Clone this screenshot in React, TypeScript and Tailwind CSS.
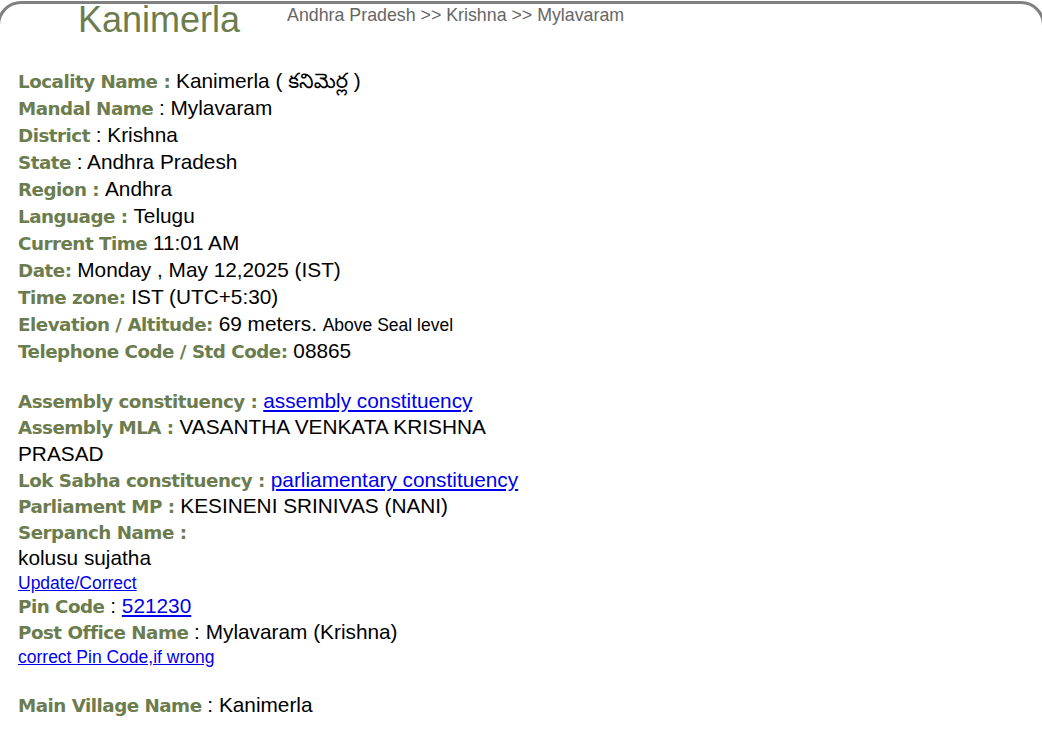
import React from "react";

const label = "font-bold text-[#6b7c4e] font-['DejaVu_Sans','Verdana',sans-serif] text-[18.3px] tracking-[-0.5px]";

type Row = { l: string; sep?: string; v?: React.ReactNode };

const Line = ({ l, sep = "", v, lh = "leading-[27px] h-[27px]" }: Row & { lh?: string }) => (
  <div className={`${lh} whitespace-nowrap`}>
    <span className={label}>{l}</span>
    {sep}
    {v}
  </div>
);

const Link = ({ children, small }: { children: React.ReactNode; small?: boolean }) => (
  <a href="#" className={`text-[#0000ee] underline ${small ? "text-[17.5px]" : ""}`}>
    {children}
  </a>
);

export default function App() {
  const top: Row[] = [
    { l: "Locality Name : ", v: "Kanimerla ( కనిమెర్ల )" },
    { l: "Mandal Name", sep: " : ", v: "Mylavaram" },
    { l: "District", sep: " : ", v: "Krishna" },
    { l: "State", sep: " : ", v: "Andhra Pradesh" },
    { l: "Region : ", v: "Andhra" },
    { l: "Language : ", v: "Telugu" },
    { l: "Current Time", sep: " ", v: "11:01 AM" },
    { l: "Date:", sep: " ", v: "Monday , May 12,2025 (IST)" },
    { l: "Time zone:", sep: " ", v: "IST (UTC+5:30)" },
    {
      l: "Elevation / Altitude:",
      sep: " ",
      v: (
        <>
          69 meters. <span className="text-[17.5px]">Above Seal level</span>
        </>
      ),
    },
    { l: "Telephone Code / Std Code:", sep: " ", v: "08865" },
  ];

  return (
    <div className="w-full min-h-[742px] overflow-hidden bg-white font-['Liberation_Sans','Noto_Sans','Noto_Sans_Telugu',Arial,sans-serif] text-[20.8px] text-black">
      <div className="-mx-[3px] mt-[1px] border-t-[3px] border-x-[3px] border-[#808080] rounded-t-[24px] min-h-[760px]">
        <div className="flex items-start">
          <h1 className="ml-[78px] text-[36px] leading-[31px] h-[31px] text-[#6b7c4e] font-['Liberation_Sans',Arial,sans-serif]">
            Kanimerla
          </h1>
          <div className="ml-[47px] mt-[2px] text-[17.8px] leading-[18px] text-[#666666]">
            Andhra Pradesh &gt;&gt; Krishna &gt;&gt; Mylavaram
          </div>
        </div>

        <div className="pl-[18px] pt-[32px] w-[560px]">
          {top.map((r) => (
            <Line key={r.l} {...r} />
          ))}

          <div className="h-[24px]" />

          <Line
            lh="leading-[26px] h-[26px]"
            l="Assembly constituency : "
            v={<Link>assembly constituency</Link>}
          />
          <div className="leading-[26px] w-[520px]">
            <span className={label}>Assembly MLA : </span>
            VASANTHA VENKATA KRISHNA PRASAD
          </div>
          <Line
            lh="leading-[26px] h-[26px]"
            l="Lok Sabha constituency : "
            v={<Link>parliamentary constituency</Link>}
          />
          <Line lh="leading-[26px] h-[26px]" l="Parliament MP : " v="KESINENI SRINIVAS (NANI)" />
          <Line lh="leading-[26px] h-[26px]" l="Serpanch Name : " />
          <div className="leading-[26px] h-[26px]">kolusu sujatha</div>
          <div className="leading-[22px] h-[22px]">
            <Link small>Update/Correct</Link>
          </div>
          <Line lh="leading-[26px] h-[26px]" l="Pin Code" sep=" : " v={<Link>521230</Link>} />
          <Line lh="leading-[26px] h-[26px]" l="Post Office Name" sep=" : " v="Mylavaram (Krishna)" />
          <div className="leading-[22px] h-[22px]">
            <Link small>correct Pin Code,if wrong</Link>
          </div>

          <div className="h-[25px]" />

          <Line lh="leading-[26px] h-[26px]" l="Main Village Name" sep=" : " v="Kanimerla" />
        </div>
      </div>
    </div>
  );
}
